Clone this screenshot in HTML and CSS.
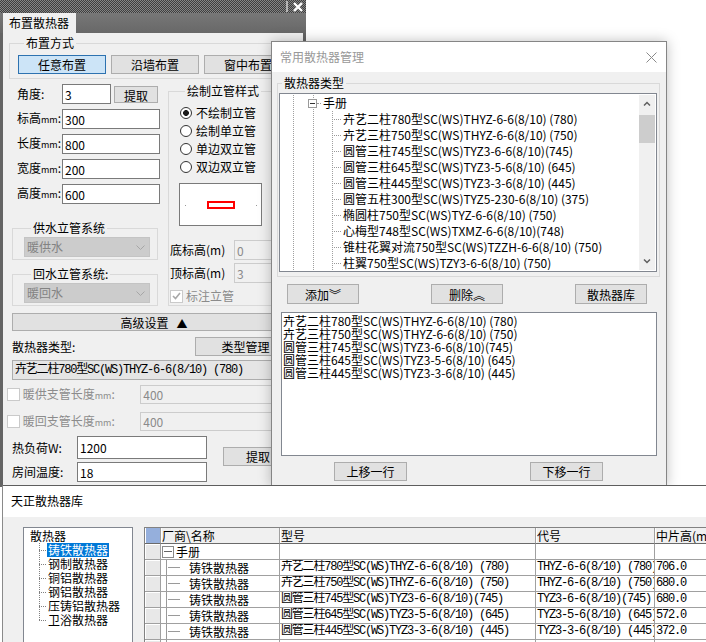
FILE: index.html
```html
<!DOCTYPE html>
<html lang="zh-CN">
<head>
    <meta charset="UTF-8">
    <title>布置散热器</title>
    <link rel="stylesheet" href="styles.css">
</head>
<body>
<div class="desk">

    <!-- 布置散热器 -->
    <div class="win win-place">
        <div class="dither-bar">
            <span class="sep"></span>
            <svg class="xbtn" width="10" height="10" viewBox="0 0 10 10"><path d="M1 1L9 9M9 1L1 9" stroke="#fff" stroke-width="2.4"/></svg>
        </div>
        <div class="tabbar"><div class="tab">布置散热器</div></div>
        <div class="place-body">
            <fieldset class="grp grp-mode">
                <legend>布置方式</legend>
                <div class="mode-btns">
                    <button class="btn on">任意布置</button>
                    <button class="btn">沿墙布置</button>
                    <button class="btn">窗中布置</button>
                </div>
            </fieldset>

            <div class="cols">
                <div class="col-left">
                    <div class="frow"><label>角度:</label><input class="ed ed-short" value="3"><button class="btn btn-pick">提取</button></div>
                    <div class="frow"><label>标高<small>mm</small>:</label><input class="ed" value="300"></div>
                    <div class="frow"><label>长度<small>mm</small>:</label><input class="ed" value="800"></div>
                    <div class="frow"><label>宽度<small>mm</small>:</label><input class="ed" value="200"></div>
                    <div class="frow"><label>高度<small>mm</small>:</label><input class="ed" value="600"></div>

                    <fieldset class="grp grp-sys">
                        <legend>供水立管系统</legend>
                        <div class="combo-dis"><span>暖供水</span><svg width="9" height="5" viewBox="0 0 9 5"><path d="M0.5 0.5L4.5 4.5L8.5 0.5" fill="none" stroke="#a6a6a6"/></svg></div>
                    </fieldset>
                    <fieldset class="grp grp-sys grp-ret">
                        <legend>回水立管系统:</legend>
                        <div class="combo-dis"><span>暖回水</span><svg width="9" height="5" viewBox="0 0 9 5"><path d="M0.5 0.5L4.5 4.5L8.5 0.5" fill="none" stroke="#a6a6a6"/></svg></div>
                    </fieldset>
                </div>

                <div class="col-right">
                    <fieldset class="grp grp-style">
                        <legend>绘制立管样式</legend>
                        <div class="radio-row"><span class="radio on"></span>不绘制立管</div>
                        <div class="radio-row"><span class="radio"></span>绘制单立管</div>
                        <div class="radio-row"><span class="radio"></span>单边双立管</div>
                        <div class="radio-row"><span class="radio"></span>双边双立管</div>
                        <div class="preview"><span class="pv-rect"></span></div>
                        <div class="erow erow-first"><label>底标高(m)</label><input class="ed ed-dis" value="0" disabled></div>
                        <div class="erow"><label>顶标高(m)</label><input class="ed ed-dis" value="3" disabled></div>
                        <div class="crow-dis">
                            <span class="chk"><svg width="9" height="8" viewBox="0 0 9 8"><path d="M1 4l2.5 2.5L8 1" fill="none" stroke="#a8a8a8" stroke-width="1.6"/></svg></span>标注立管
                        </div>
                    </fieldset>
                </div>
            </div>

            <button class="btn adv-bar">高级设置&nbsp;&nbsp;&nbsp;<span class="tri">▲</span></button>

            <div class="type-row">
                <label>散热器类型:</label>
                <button class="btn btn-type">类型管理</button>
            </div>
            <div class="combo-type mono">卉艺二柱780型SC(WS)THYZ-6-6(8/10) (780)</div>

            <div class="brow brow-first"><span class="chk"></span><label>暖供支管长度<small>mm</small>:</label><input class="ed ed-dis ed-br" value="400" disabled></div>
            <div class="brow"><span class="chk"></span><label>暖回支管长度<small>mm</small>:</label><input class="ed ed-dis ed-br" value="400" disabled></div>

            <div class="load">
                <label>热负荷W:</label>
                <input class="ed ed-load ed-tall" value="1200">
                <button class="btn btn-load">提取</button>
                <label>房间温度:</label>
                <input class="ed ed-load" value="18">
            </div>
        </div>
    </div>

    <!-- 常用散热器管理 -->
    <div class="win win-mgr">
        <div class="mgr-title">
            <span>常用散热器管理</span>
            <svg width="11" height="11" viewBox="0 0 11 11"><path d="M0.5 0.5L10.5 10.5M10.5 0.5L0.5 10.5" stroke="#8a8a8a"/></svg>
        </div>
        <div class="mgr-body">
            <fieldset class="grp grp-type">
                <legend>散热器类型</legend>
                <div class="tree">
                    <div class="tree-list">
                        <div class="troot"><span class="tbox"></span><span class="lead lead-root"></span>手册</div>
                        <div class="leaves">
                            <div class="leaf"><span class="lead"></span>卉艺二柱780型SC(WS)THYZ-6-6(8/10) (780)</div>
                            <div class="leaf"><span class="lead"></span>卉艺三柱750型SC(WS)THYZ-6-6(8/10) (750)</div>
                            <div class="leaf"><span class="lead"></span>圆管三柱745型SC(WS)TYZ3-6-6(8/10)(745)</div>
                            <div class="leaf"><span class="lead"></span>圆管三柱645型SC(WS)TYZ3-5-6(8/10) (645)</div>
                            <div class="leaf"><span class="lead"></span>圆管三柱445型SC(WS)TYZ3-3-6(8/10) (445)</div>
                            <div class="leaf"><span class="lead"></span>圆管五柱300型SC(WS)TYZ5-230-6(8/10) (375)</div>
                            <div class="leaf"><span class="lead"></span>椭圆柱750型SC(WS)TYZ-6-6(8/10) (750)</div>
                            <div class="leaf"><span class="lead"></span>心梅型748型SC(WS)TXMZ-6-6(8/10)(748)</div>
                            <div class="leaf"><span class="lead"></span>锥柱花翼对流750型SC(WS)TZZH-6-6(8/10) (750)</div>
                            <div class="leaf"><span class="lead"></span>柱翼750型SC(WS)TZY3-6-6(8/10) (750)</div>
                        </div>
                    </div>
                    <div class="vscroll">
                        <div class="sb-btn"><svg width="8" height="5" viewBox="0 0 8 5"><path d="M1 4.5L4 1.5L7 4.5" fill="none" stroke="#606060" stroke-width="1.5"/></svg></div>
                        <div class="sb-thumb"></div>
                        <div class="sb-btn sb-down"><svg width="8" height="5" viewBox="0 0 8 5"><path d="M1 0.5L4 3.5L7 0.5" fill="none" stroke="#606060" stroke-width="1.5"/></svg></div>
                    </div>
                </div>
            </fieldset>

            <div class="mgr-actions">
                <button class="btn btn-act">添加︾</button>
                <button class="btn btn-act">删除︽</button>
                <button class="btn btn-act">散热器库</button>
            </div>

            <div class="mgr-list">
                <div>卉艺二柱780型SC(WS)THYZ-6-6(8/10) (780)</div>
                <div>卉艺三柱750型SC(WS)THYZ-6-6(8/10) (750)</div>
                <div>圆管三柱745型SC(WS)TYZ3-6-6(8/10)(745)</div>
                <div>圆管三柱645型SC(WS)TYZ3-5-6(8/10) (645)</div>
                <div>圆管三柱445型SC(WS)TYZ3-3-6(8/10) (445)</div>
            </div>

            <div class="mgr-moves">
                <button class="btn btn-move">上移一行</button>
                <button class="btn btn-move">下移一行</button>
            </div>
        </div>
    </div>

    <!-- 天正散热器库 -->
    <div class="win win-lib">
        <div class="lib-title">天正散热器库</div>
        <div class="lib-body">
            <div class="lib-tree">
                <div class="lib-root">散热器</div>
                <div class="lib-kids">
                    <div class="kid"><span class="lead lead-kid"></span><span class="sel">铸铁散热器</span></div>
                    <div class="kid"><span class="lead lead-kid"></span><span>钢制散热器</span></div>
                    <div class="kid"><span class="lead lead-kid"></span><span>铜铝散热器</span></div>
                    <div class="kid"><span class="lead lead-kid"></span><span>钢铝散热器</span></div>
                    <div class="kid"><span class="lead lead-kid"></span><span>压铸铝散热器</span></div>
                    <div class="kid"><span class="lead lead-kid"></span><span>卫浴散热器</span></div>
                </div>
            </div>

            <table class="grid">
                <thead>
                    <tr>
                        <th class="corner"></th>
                        <th class="c-name">厂商\名称</th>
                        <th class="c-model">型号</th>
                        <th class="c-code">代号</th>
                        <th class="c-h">中片高(mm)</th>
                    </tr>
                </thead>
                <tbody>
                    <tr><td class="rh"></td><td class="nm-root"><span class="gbox"></span>手册</td><td></td><td></td><td></td></tr>
                    <tr><td class="rh"></td><td class="nm-leaf">铸铁散热器</td><td class="mono">卉艺二柱780型SC(WS)THYZ-6-6(8/10) (780)</td><td class="mono">THYZ-6-6(8/10) (780)</td><td class="mono">706.0</td></tr>
                    <tr><td class="rh"></td><td class="nm-leaf">铸铁散热器</td><td class="mono">卉艺三柱750型SC(WS)THYZ-6-6(8/10) (750)</td><td class="mono">THYZ-6-6(8/10) (750)</td><td class="mono">680.0</td></tr>
                    <tr><td class="rh"></td><td class="nm-leaf">铸铁散热器</td><td class="mono">圆管三柱745型SC(WS)TYZ3-6-6(8/10)(745)</td><td class="mono">TYZ3-6-6(8/10)(745)</td><td class="mono">680.0</td></tr>
                    <tr><td class="rh"></td><td class="nm-leaf">铸铁散热器</td><td class="mono">圆管三柱645型SC(WS)TYZ3-5-6(8/10) (645)</td><td class="mono">TYZ3-5-6(8/10) (645)</td><td class="mono">572.0</td></tr>
                    <tr><td class="rh"></td><td class="nm-leaf">铸铁散热器</td><td class="mono">圆管三柱445型SC(WS)TYZ3-3-6(8/10) (445)</td><td class="mono">TYZ3-3-6(8/10) (445)</td><td class="mono">372.0</td></tr>
                    <tr><td class="rh"></td><td class="nm-leaf"></td><td></td><td></td><td></td></tr>
                </tbody>
            </table>
        </div>
    </div>

</div>
</body>
</html>
```

FILE: styles.css
```css
body {
    margin: 0;
    font: 12px/14px "Noto Sans CJK SC", sans-serif;
    color: #000;
    background: #fff;
}
.desk {
    position: relative;
    width: 706px;
    height: 642px;
    overflow: hidden;
}
.win {
    position: absolute;
    box-sizing: border-box;
}
small {
    font-size: 9px;
}
.mono {
    font-family: "Liberation Mono", "Noto Sans CJK SC", monospace;
    letter-spacing: -1.2px;
}

/* shared controls */
.btn {
    box-sizing: border-box;
    height: 19px;
    margin: 0;
    padding: 0;
    font: inherit;
    line-height: 17px;
    color: #000;
    background: #e1e1e1;
    border: 1px solid #adadad;
}
.btn.on {
    background: #cce4f7;
    border-color: #2d72b0;
}
.ed {
    box-sizing: border-box;
    width: 98px;
    height: 20px;
    margin: 0;
    padding: 0 2px;
    font: 12px "Noto Sans CJK SC", sans-serif;
    color: #000;
    background: #fff;
    border: 1px solid #7a7a7a;
    outline: none;
}
.ed-dis {
    width: 70px;
    color: #8a8a8a;
    background: #f0f0f0;
    border-color: #cccccc;
}
.grp {
    margin: 0;
    padding: 0;
    min-width: 0;
    border: 1px solid #d9d9d9;
}
.grp legend {
    padding: 0 2px;
    line-height: 14px;
}
.chk {
    box-sizing: border-box;
    display: inline-flex;
    align-items: center;
    justify-content: center;
    width: 13px;
    height: 13px;
    margin-right: 3px;
    background: #fff;
    border: 1px solid #cacaca;
}

/* 布置散热器 */
.win-place {
    left: 0;
    top: 0;
    width: 306px;
    height: 487px;
    background: #f0f0f0;
    z-index: 1;
}
.dither-bar {
    display: flex;
    align-items: center;
    justify-content: flex-end;
    height: 13px;
    padding-right: 3px;
    background: repeating-conic-gradient(#3e3e3e 0 25%, #858585 0 50%) 0 0 / 2px 2px;
}
.dither-bar .sep {
    width: 2px;
    height: 11px;
    margin-right: 5px;
    background: #b5b5b5;
}
.tabbar {
    display: flex;
    height: 20px;
    padding-left: 3px;
    background: linear-gradient(#777, #686868);
}
.tab {
    width: 67px;
    padding-left: 6px;
    line-height: 20px;
    background: #f0f0f0;
}
.place-body {
    box-sizing: border-box;
    height: 454px;
    padding: 3px 6px 0;
    border-left: 3px solid #646464;
    border-right: 3px solid #646464;
}
.grp-mode {
    padding: 5px 0 4px 8px;
}
.grp-mode legend {
    margin-left: 6px;
}
.mode-btns {
    display: flex;
    gap: 5px;
}
.mode-btns .btn {
    width: 88px;
}
.cols {
    display: flex;
    margin-top: 5px;
}
.col-left {
    width: 148px;
    margin-left: 3px;
}
.frow {
    display: flex;
    align-items: center;
    height: 20px;
    padding-left: 5px;
}
.frow + .frow {
    margin-top: 5px;
}
.frow label {
    width: 45px;
}
.ed-short {
    width: 49px;
}
.btn-pick {
    width: 44px;
    height: 17px;
    margin-left: 3px;
}
.grp-sys {
    width: 146px;
    box-sizing: border-box;
    margin-top: 17px;
    padding: 2px 7px 2px 11px;
}
.grp-sys legend {
    margin-left: 7px;
}
.grp-ret {
    margin-top: 7px;
}
.combo-dis {
    box-sizing: border-box;
    display: flex;
    align-items: center;
    justify-content: space-between;
    height: 20px;
    padding: 0 4px 0 2px;
    color: #838383;
    background: #cccccc;
    border: 1px solid #c4c4c4;
}
.col-right {
    flex: 1;
    margin-left: 8px;
}
.grp-style {
    padding: 6px 0 1px 11px;
}
.grp-style legend {
    margin-left: 5px;
}
.radio-row {
    display: flex;
    align-items: center;
    height: 18px;
}
.radio {
    box-sizing: border-box;
    width: 12px;
    height: 12px;
    margin-right: 4px;
    background: #fff;
    border: 1px solid #333;
    border-radius: 50%;
}
.radio.on {
    background: radial-gradient(circle, #1a1a1a 0 2.6px, #fff 3.2px);
}
.preview {
    box-sizing: border-box;
    display: flex;
    align-items: center;
    justify-content: center;
    width: 83px;
    height: 43px;
    margin: 7px 0 0 -1px;
    border: 1px solid #7a7a7a;
    background:
        linear-gradient(#999, #999) 5px 21px / 1px 1px no-repeat,
        linear-gradient(#999, #999) 76px 21px / 1px 1px no-repeat,
        #fff;
}
.pv-rect {
    box-sizing: border-box;
    width: 28px;
    height: 8px;
    margin-left: 1px;
    border: 2px solid #f00;
}
.erow {
    display: flex;
    align-items: center;
    height: 20px;
    margin: 3px 0 0 -10px;
}
.erow-first {
    margin-top: 14px;
}
.erow label {
    width: 64px;
}
.crow-dis {
    display: flex;
    align-items: center;
    height: 16px;
    margin: 5px 0 0 -10px;
    color: #8b8b8b;
}
.adv-bar {
    display: block;
    width: 284px;
    height: 18px;
    margin: 7px 0 0 3px;
}
.tri {
    font-size: 11px;
}
.type-row {
    display: flex;
    align-items: center;
    justify-content: space-between;
    width: 284px;
    margin: 6px 0 0 3px;
}
.btn-type {
    width: 101px;
}
.combo-type {
    box-sizing: border-box;
    width: 284px;
    height: 20px;
    margin: 4px 0 0 3px;
    padding-left: 2px;
    line-height: 18px;
    white-space: nowrap;
    overflow: hidden;
    background: #e5e5e5;
    border: 1px solid #adadad;
}
.brow {
    display: flex;
    align-items: center;
    height: 19px;
    margin: 8px 0 0 -2px;
    color: #8c8c8c;
}
.brow-first {
    margin-top: 5px;
}
.brow label {
    width: 120px;
}
.ed-br {
    width: 160px;
    height: 19px;
}
.load {
    display: grid;
    grid-template-columns: 65px 146px 70px;
    grid-template-rows: 23px 20px;
    row-gap: 3px;
    align-items: center;
    margin: 5px 0 0 3px;
}
.ed-load {
    width: 130px;
}
.ed-tall {
    height: 23px;
}
.btn-load {
    grid-column: 3;
    grid-row: 1 / span 2;
    align-self: start;
    width: 70px;
    margin-top: 11px;
}

/* 常用散热器管理 */
.win-mgr {
    left: 271px;
    top: 41px;
    width: 396px;
    height: 446px;
    background: #f0f0f0;
    border: 1px solid #858585;
    box-shadow: 0 0 12px rgba(0, 0, 0, 0.25);
    z-index: 2;
}
.mgr-title {
    display: flex;
    align-items: center;
    justify-content: space-between;
    height: 30px;
    padding: 0 9px 0 8px;
    color: #999;
    background: #fff;
}
.mgr-body {
    padding: 0 6px 0 5px;
}
.grp-type {
    margin-top: 4px;
    padding: 3px 2px 4px 1px;
}
.grp-type legend {
    margin-left: 3px;
}
.tree {
    box-sizing: border-box;
    display: flex;
    height: 179px;
    padding: 1px;
    background: #fff;
    border: 1px solid #828790;
}
.tree-list {
    flex: 1;
    overflow: hidden;
    white-space: nowrap;
    line-height: 16px;
    background:
        linear-gradient(#a0a0a0 50%, transparent 0) 12px 0 / 1px 2px repeat-y,
        linear-gradient(#a0a0a0 50%, transparent 0) 32px 0 / 1px 2px repeat-y;
}
.troot {
    display: flex;
    align-items: center;
    height: 16px;
    padding-left: 27px;
}
.tbox {
    box-sizing: border-box;
    width: 9px;
    height: 9px;
    border: 1px solid #9a9a9a;
    background: linear-gradient(#333, #333) center / 5px 1px no-repeat, #fff;
}
.lead {
    flex: none;
    width: 9px;
    margin-right: 2px;
    border-top: 1px dotted #9a9a9a;
}
.lead-root {
    width: 4px;
}
.leaves {
    background: linear-gradient(#a0a0a0 50%, transparent 0) 51px 0 / 1px 2px repeat-y;
}
.leaf {
    display: flex;
    align-items: center;
    height: 16px;
    padding-left: 51px;
}
.vscroll {
    display: flex;
    flex-direction: column;
    width: 16px;
    background: #f0f0f0;
}
.sb-btn {
    display: flex;
    align-items: center;
    justify-content: center;
    height: 17px;
}
.sb-thumb {
    height: 28px;
    margin-top: 3px;
    background: #cdcdcd;
}
.sb-down {
    margin-top: auto;
}
.mgr-actions {
    display: flex;
    justify-content: space-between;
    margin-top: 7px;
    padding: 0 13px 0 10px;
}
.btn-act {
    width: 72px;
    height: 20px;
}
.mgr-list {
    box-sizing: border-box;
    height: 144px;
    margin: 8px 3px 0 4px;
    padding: 1px 0 0 1px;
    line-height: 13px;
    white-space: nowrap;
    background: #fff;
    border: 1px solid #828790;
}
.mgr-moves {
    display: flex;
    gap: 123px;
    margin-top: 6px;
    padding-left: 57px;
}
.btn-move {
    width: 73px;
}

/* 天正散热器库 */
.win-lib {
    left: 2px;
    top: 485px;
    width: 720px;
    height: 170px;
    background: #f0f0f0;
    border-top: 1px solid #5d5d5d;
    border-left: 1px solid #8a8a8a;
    z-index: 3;
}
.lib-title {
    display: flex;
    align-items: center;
    box-sizing: border-box;
    height: 31px;
    padding: 0 0 2px 8px;
    background: #fff;
}
.lib-body {
    display: flex;
    align-items: flex-start;
    padding: 10px 0 0 20px;
}
.lib-tree {
    flex: none;
    box-sizing: border-box;
    width: 110px;
    height: 130px;
    padding-top: 1px;
    line-height: 14px;
    white-space: nowrap;
    overflow: hidden;
    background: #fff;
    border: 1px solid #828790;
}
.lib-root {
    padding-left: 6px;
}
.lib-kids {
    background: linear-gradient(#808080 50%, transparent 0) 15px 0 / 1px 2px repeat-y;
}
.kid {
    display: flex;
    align-items: center;
    height: 14px;
    padding-left: 15px;
}
.kid:last-child {
    background: linear-gradient(#fff, #fff) 15px 8px / 1px 6px no-repeat;
}
.lead-kid {
    width: 7px;
    margin-right: 1px;
    border-top-color: #808080;
}
.kid span:last-child {
    padding: 0 1px;
}
.kid .sel {
    color: #fff;
    background: #0078d7;
}
.grid {
    flex: none;
    width: 591px;
    margin-left: 11px;
    table-layout: fixed;
    border-collapse: separate;
    border-spacing: 0;
    border-top: 1px solid #828282;
    border-left: 1px solid #828282;
}
.grid th,
.grid td {
    box-sizing: border-box;
    height: 16px;
    padding: 0 1px;
    line-height: 15px;
    text-align: left;
    font-weight: normal;
    white-space: nowrap;
    overflow: hidden;
    border-right: 1px solid #a0a0a0;
    border-bottom: 1px solid #a0a0a0;
}
.grid th {
    background: #f0f0f0;
    border-bottom-color: #6a6a6a;
    box-shadow: inset 1px 0 #fff;
}
.grid td {
    background: #fff;
}
.grid .corner {
    width: 16px;
    background: #95afdc;
}
.grid .c-name {
    width: 119px;
}
.grid .c-model {
    width: 256px;
}
.grid .c-code {
    width: 119px;
}
.grid .c-h {
    width: 80px;
}
.grid td.rh {
    background: #e8e8e8;
    box-shadow: inset 1px 1px #fff;
}
.nm-root {
    display: flex;
    align-items: center;
}
.gbox {
    box-sizing: border-box;
    width: 12px;
    height: 12px;
    margin-right: 2px;
    border: 1px solid #8a8a8a;
    background: linear-gradient(#666, #666) center / 8px 1px no-repeat, #fff;
}
.grid td.nm-leaf {
    padding-left: 28px;
    background:
        linear-gradient(#9a9a9a, #9a9a9a) 5px 0 / 1px 100% no-repeat,
        linear-gradient(#9a9a9a, #9a9a9a) 7px 7px / 12px 1px no-repeat,
        #fff;
}
```
